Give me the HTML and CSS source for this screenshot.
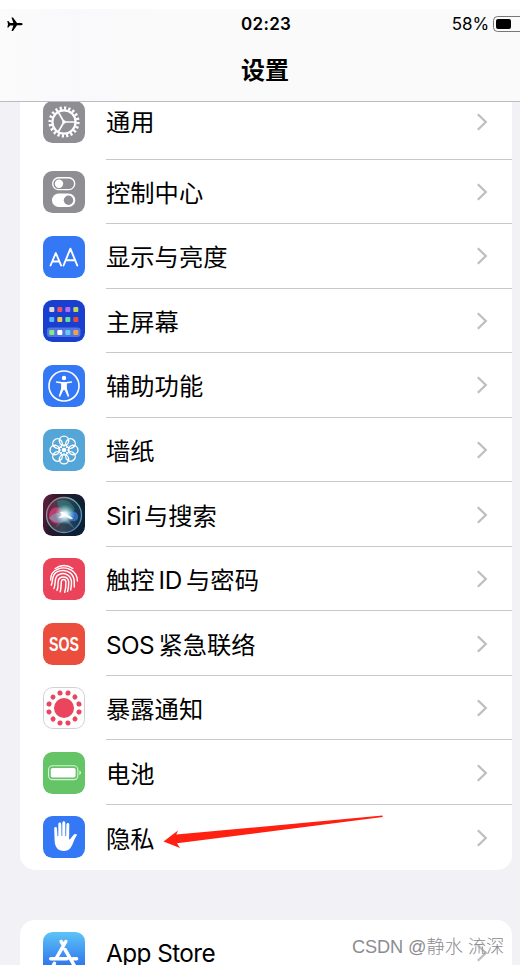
FILE: index.html
```
<!DOCTYPE html>
<html lang="zh-CN">
<head>
<meta charset="utf-8">
<title>设置</title>
<link rel="stylesheet" href="styles.css">
</head>
<body>
<svg class="defs" width="0" height="0" aria-hidden="true">
  <defs>
    <symbol id="chevron" viewBox="0 0 12 18"><path d="M1.8 1.2 9.8 9l-8 7.8" fill="none" stroke="#bfbfc3" stroke-width="2.3"/></symbol>
    <linearGradient id="storeBg" x1="0" y1="0" x2="0" y2="1"><stop offset="0" stop-color="#5dc4f7"/><stop offset="1" stop-color="#2463ea"/></linearGradient>
    <linearGradient id="siriBg" x1="0" y1="0" x2="1" y2="0.3"><stop offset="0" stop-color="#67203c"/><stop offset=".4" stop-color="#26182c"/><stop offset="1" stop-color="#0b2034"/></linearGradient>
    <linearGradient id="siriRing" x1="0" y1="0" x2="1" y2="1"><stop offset="0" stop-color="#c06084"/><stop offset=".45" stop-color="#5fb5a9"/><stop offset="1" stop-color="#5277bd"/></linearGradient>
    <linearGradient id="siriOrb" x1="0" y1="0" x2="1" y2="0"><stop offset="0" stop-color="#a9214e"/><stop offset=".45" stop-color="#4b6a72"/><stop offset="1" stop-color="#14446b"/></linearGradient>
    <radialGradient id="siriGlow"><stop offset="0" stop-color="#fff"/><stop offset=".25" stop-color="#e9fbff" stop-opacity=".9"/><stop offset="1" stop-color="#a8eaf0" stop-opacity="0"/></radialGradient>
  </defs>
</svg>

<header class="header">
  <div class="status">
    <svg class="plane" viewBox="0 0 16 15"><path d="M15.6 7.2c0-.8-1-1.1-2-1.1H10L6 .5H4.5L6.4 6H3L1.4 4H.3l.7 3.2-.7 3.2h1.1L3 8.4h3.4l-1.9 5.5H6l4-5.6h3.6c1 0 2-.3 2-1.1z"/></svg>
    <span class="time">02:23</span>
    <span class="percent">58%</span>
    <span class="battery"><i></i></span>
  </div>
  <h1>设置</h1>
</header>

<main>
  <section class="card">
    <div class="row first">
      <svg class="icon" viewBox="0 0 42 42"><rect width="42" height="42" rx="9.5" fill="#8e8e93"/>
        <g fill="none" stroke="#fff"><circle cx="21" cy="21" r="14" stroke-width="3.2" pathLength="40" stroke-dasharray="1 1"/><circle cx="21" cy="21" r="11.6" stroke-width="2.2"/><path d="M21 21h11M21 21l-5.5-9.5M21 21l-5.5 9.5" stroke-width="1.6"/></g><circle cx="21" cy="21" r="1.8" fill="#fff"/></svg>
      <div class="body"><span>通用</span><svg class="chev"><use href="#chevron"/></svg></div>
    </div>
    <div class="row">
      <svg class="icon" viewBox="0 0 42 42"><rect width="42" height="42" rx="9.5" fill="#8e8e93"/>
        <rect x="9.7" y="6.8" width="22" height="11.8" rx="5.9" fill="none" stroke="#fff" stroke-width="1.4"/><circle cx="16" cy="12.7" r="4.2" fill="#fff"/><rect x="9" y="22.6" width="23.3" height="13.4" rx="6.7" fill="#fff"/><circle cx="25.5" cy="29.3" r="4.7" fill="#8e8e93"/></svg>
      <div class="body"><span>控制中心</span><svg class="chev"><use href="#chevron"/></svg></div>
    </div>
    <div class="row">
      <svg class="icon" viewBox="0 0 42 42"><rect width="42" height="42" rx="9.5" fill="#3478f6"/>
        <g fill="none" stroke="#fff" stroke-width="1.9" stroke-linecap="round" stroke-linejoin="round"><path d="M7.5 29.5 12.8 17l5.3 12.5M9.2 25.5h7.2"/><path d="M20.5 29.5 27.4 12.7l6.9 16.8M22.7 24.3h9.4"/></g></svg>
      <div class="body"><span>显示与亮度</span><svg class="chev"><use href="#chevron"/></svg></div>
    </div>
    <div class="row">
      <svg class="icon" viewBox="0 0 42 42"><rect width="42" height="42" rx="9.5" fill="#193fd0"/>
        <rect x="4" y="27.6" width="33.5" height="9.4" rx="3" fill="#5475df"/>
        <rect x="6.3" y="7" width="5" height="5" rx="1" fill="#ddd9d5"/><rect x="14.3" y="7" width="5" height="5" rx="1" fill="#ed5464"/><rect x="22.3" y="7" width="5" height="5" rx="1" fill="#b66cf3"/><rect x="30.3" y="7" width="5" height="5" rx="1" fill="#b9da55"/>
        <rect x="6.3" y="17" width="5" height="5" rx="1" fill="#5ab9f4"/><rect x="14.3" y="17" width="5" height="5" rx="1" fill="#fac43d"/><rect x="22.3" y="17" width="5" height="5" rx="1" fill="#65dba0"/><rect x="30.3" y="17" width="5" height="5" rx="1" fill="#eb4a39"/>
        <rect x="6.3" y="30" width="5" height="5" rx="1" fill="#85ec7c"/><rect x="14.3" y="30" width="5" height="5" rx="1" fill="#fff"/><rect x="22.3" y="30" width="5" height="5" rx="1" fill="#61cdf8"/><rect x="30.3" y="30" width="5" height="5" rx="1" fill="#f0a150"/></svg>
      <div class="body"><span>主屏幕</span><svg class="chev"><use href="#chevron"/></svg></div>
    </div>
    <div class="row">
      <svg class="icon" viewBox="0 0 42 42"><rect width="42" height="42" rx="9.5" fill="#3478f6"/>
        <circle cx="21" cy="21" r="15" fill="none" stroke="#fff" stroke-width="1.6"/><circle cx="21" cy="13" r="2.2" fill="#fff"/><path d="M13.5 16.2 18.8 17h4.4l5.3-.8c.9 0 .9 1.3 0 1.5l-4.6.9v5l2.2 7.2c.2 1-1.1 1.4-1.5.5L21.6 25h-1.2l-3 6.3c-.4.9-1.7.5-1.5-.5l2.2-7.2v-5l-4.6-.9c-.9-.2-.9-1.5 0-1.5z" fill="#fff"/></svg>
      <div class="body"><span>辅助功能</span><svg class="chev"><use href="#chevron"/></svg></div>
    </div>
    <div class="row">
      <svg class="icon" viewBox="0 0 42 42"><rect width="42" height="42" rx="9.5" fill="#55a6d8"/>
        <g fill="none" stroke="#fff" stroke-width="1.4"><circle id="petal" cx="21" cy="11.8" r="4.7"/><use href="#petal" transform="rotate(45 21 21)"/><use href="#petal" transform="rotate(90 21 21)"/><use href="#petal" transform="rotate(135 21 21)"/><use href="#petal" transform="rotate(180 21 21)"/><use href="#petal" transform="rotate(225 21 21)"/><use href="#petal" transform="rotate(270 21 21)"/><use href="#petal" transform="rotate(315 21 21)"/>
        <path d="M21 18v-3M21 24v3M18 21h-3M24 21h3M18.9 18.9l-2.3-2.3M23.1 18.9l2.3-2.3M18.9 23.1l-2.3 2.3M23.1 23.1l2.3 2.3" stroke-width="1"/></g><circle cx="21" cy="21" r="2.3" fill="#fff"/></svg>
      <div class="body"><span>墙纸</span><svg class="chev"><use href="#chevron"/></svg></div>
    </div>
    <div class="row">
      <svg class="icon" viewBox="0 0 42 42"><rect width="42" height="42" rx="9.5" fill="url(#siriBg)"/>
        <circle cx="21" cy="21" r="17.5" fill="url(#siriOrb)" fill-opacity=".55" stroke="url(#siriRing)" stroke-width="1.3"/>
        <ellipse cx="14" cy="21.5" rx="8" ry="8.3" fill="#e1457a" fill-opacity=".7"/>
        <path d="M6 24c6-7 12-6 17-1s-10 9-17 1z" fill="#72b5cc" fill-opacity=".55"/>
        <path d="M22 21c4-5 12-5 13 1s-7 8-13-1z" fill="#347bd5" fill-opacity=".8"/>
        <path d="M20 22 12 34l9-7 11 8-9-13z" fill="#6b8caa" fill-opacity=".45"/>
        <path d="M14 7q13-4 18 9l-9 5q-8-2-9-14z" fill="#32a598" fill-opacity=".4"/>
        <circle cx="22" cy="20.5" r="10" fill="url(#siriGlow)"/><path d="M17 18q4-1 6 3 4 0 7 4-5 0-7-3-4 2-8 2 3-2 4-3z" fill="#fff"/></svg>
      <div class="body"><span><b class="siri">Siri</b>与搜索</span><svg class="chev"><use href="#chevron"/></svg></div>
    </div>
    <div class="row">
      <svg class="icon" viewBox="0 0 42 42"><rect width="42" height="42" rx="9.5" fill="#eb445a"/>
        <g fill="none" stroke="#fff" stroke-width="1.45" stroke-linecap="round"><path d="M12.2 10.5q8.8-6 17.6 0"/><path d="M7.6 22c0-6 3.500-9.500 7.200-10.900 9-3.600 19.600 1.800 19.600 11.900"/><path d="M8.300 27.200c2.100-3.800-.6-12.500 8.700-14.300 8-1.600 14.300 3.300 14.300 11.200v5"/><path d="M10.900 30.500c2.300-4.500-.3-10.200 4-13.300 6.100-4.300 13.600.3 13.600 7.300 0 2.500-.2 4.500-.8 7.400"/><path d="M14 32.400c1.800-3.600.7-6.600 1.200-9.300 1.100-6 10.400-5.500 10.500 1.300 0 3-.2 6-1.200 9"/><path d="M17.200 33.700c1.300-3.700.6-7.600 1.200-10.300.6-2.700 4.400-2.500 4.500.9 0 3.300-.1 6.400-1.200 9.900"/></g></svg>
      <div class="body"><span>触控<b class="id">ID</b>与密码</span><svg class="chev"><use href="#chevron"/></svg></div>
    </div>
    <div class="row">
      <div class="icon sos"><span>SOS</span></div>
      <div class="body"><span><b class="em">SOS</b>紧急联络</span><svg class="chev"><use href="#chevron"/></svg></div>
    </div>
    <div class="row">
      <svg class="icon" viewBox="0 0 42 42"><rect x=".5" y=".5" width="41" height="41" rx="9.2" fill="#fff" stroke="#d2d2d5"/>
        <circle cx="21" cy="21" r="10" fill="#eb445e"/><circle cx="21" cy="21" r="15.5" fill="none" stroke="#eb445e" stroke-width="5" stroke-linecap="round" pathLength="12" stroke-dasharray="0.001 0.999" transform="rotate(15 21 21)"/></svg>
      <div class="body"><span>暴露通知</span><svg class="chev"><use href="#chevron"/></svg></div>
    </div>
    <div class="row">
      <svg class="icon" viewBox="0 0 42 42"><rect width="42" height="42" rx="9.5" fill="#65c466"/>
        <rect x="5.600" y="13.800" width="29.200" height="13.800" rx="3.800" fill="none" stroke="#fff" stroke-opacity=".75" stroke-width="1.1"/><rect x="7.800" y="16" width="24.800" height="9.500" rx="1.800" fill="#fff"/><path d="M36.300 18.600c2.400.8 2.400 3.500 0 4.300z" fill="#fff" fill-opacity=".75"/></svg>
      <div class="body"><span>电池</span><svg class="chev"><use href="#chevron"/></svg></div>
    </div>
    <div class="row">
      <svg class="icon" viewBox="0 0 42 42"><rect width="42" height="42" rx="9.5" fill="#3478f6"/>
        <path d="M11.200 12.500c0-2 2.700-2 2.800 0l.5 7.800h.8V8.200c0-2.200 2.900-2.200 3 0l.2 11.800h.8V7c0-2.200 3-2.200 3 0v13h.8l.3-11.500c.1-2.100 3-2.100 2.900.1l-.2 14.700.8.200 3.300-4.300c1.200-1.500 2.600-1.300 4-.4-2.200 2.700-3.300 6.300-4.800 9.800-1.500 3.700-4 6.500-8.300 6.500-6.300 0-9.200-4-9.500-10.300z" fill="#fff"/></svg>
      <div class="body"><span>隐私</span><svg class="chev"><use href="#chevron"/></svg></div>
    </div>
  </section>

  <section class="card">
    <div class="row">
      <svg class="icon" viewBox="0 0 42 42"><rect width="42" height="42" rx="9.5" fill="url(#storeBg)"/>
        <g stroke="#fff" stroke-width="3.5" stroke-linecap="round" fill="none"><path d="M22.800 9.500 13.200 26.300M18.200 9.500l2 3.300M22 17.500l9.500 16.300M7.700 26.800H24M29.800 26.800h3.800M11.400 31.300l-1.400 2.500"/></g></svg>
      <div class="body"><span class="latin">App Store</span><svg class="chev"><use href="#chevron"/></svg></div>
    </div>
  </section>
</main>

<svg class="arrow" viewBox="0 0 221 35"><path d="M.5 26.500 15 15.500 13.300 19.600 219.400.5l.4 1.600L14 28.200 17 33z" fill="#ff2012"/></svg>
<div class="watermark"><span>CSDN @</span>静水 流深</div>
</body>
</html>
```
FILE: styles.css
```
* { box-sizing: border-box; }
body {
  margin: 0;
  position: relative;
  height: 965px;
  overflow: hidden;
  background: #f2f1f6;
  color: #000;
  font-family: Inter, "Noto Sans CJK SC", sans-serif;
}
.defs { position: absolute; }
.header {
  position: relative;
  z-index: 1;
  height: 102px;
  border-top: 9px solid #fff;
  border-bottom: 1px solid #bcbcc0;
  background: linear-gradient(90deg, #fbfbfb, #f9f9fc 14%, #fafafa 30%);
}
.status {
  display: grid;
  grid-template-columns: 232px 68px 1fr 31px;
  align-items: center;
  height: 29px;
}
.plane { width: 16px; height: 15px; margin-left: 7px; }
.time { font-size: 17px; font-weight: 600; letter-spacing: .3px; margin-left: 9px; line-height: 29px; padding-top: 1px; }
.percent { font-size: 17px; letter-spacing: -.1px; text-align: right; }
.battery {
  width: 35px;
  height: 16px;
  margin-left: 4px;
  padding: 2px;
  border: 1px solid #777;
  border-radius: 4.5px;
}
.battery i { display: block; width: 15px; height: 10px; border-radius: 2px; background: #000; }
h1 {
  margin: 13px 0 0 10px;
  text-align: center;
  font-size: 24px;
  font-weight: 600;
  line-height: 40px;
}
main { display: flex; flex-direction: column; gap: 50.5px; }
.card {
  margin: 0 8px 0 20px;
  padding-left: 23px;
  background: #fff;
  border-radius: 15px;
}
.card:first-child { margin-top: -1px; border-radius: 0 0 15px 15px; }
.row { display: flex; gap: 21px; align-items: center; height: 64.55px; }
.icon { width: 42px; height: 42px; flex: none; display: block; margin-top: .5px; }
.first .icon { margin-top: 0; }
.body {
  flex: 1;
  height: 100%;
  display: flex;
  align-items: center;
  justify-content: space-between;
  padding: 0 24px 0 0;
  border-bottom: 1px solid #c9c9cc;
  font-size: 24.3px;
  white-space: nowrap;
}
.row:last-child .body { border-bottom: 0; }
.first { height: 58.5px; align-items: flex-start; }
.first .body { align-items: flex-start; }
.first .body span { line-height: 43px; }
.first .chev { margin-top: 12px; }
.body b { font-weight: 400; }
.chev { width: 12px; height: 18px; flex: none; margin-top: 1px; }
.siri { letter-spacing: -.5px; margin-right: 3px; }
.id { letter-spacing: -.3px; margin: 0 4px; }
.em { letter-spacing: -.6px; margin-right: 4.5px; }
.latin { letter-spacing: -.55px; padding-top: 2px; }
.sos {
  display: grid;
  place-items: center;
  background: #eb4e3d;
  border-radius: 9.5px;
  color: #fff;
  font: 700 20.5px "Liberation Sans", sans-serif;
}
.sos span { transform: translateX(-.7px) scaleX(.69); }
.arrow { position: absolute; left: 163px; top: 815px; width: 221px; height: 35px; }
.watermark {
  position: absolute;
  left: 352px;
  top: 934px;
  font: 300 18.2px/27px "Liberation Sans", "Noto Sans CJK SC", sans-serif;
  color: #8c8c90;
  white-space: nowrap;
}
.watermark span { letter-spacing: -.1px; }
```
